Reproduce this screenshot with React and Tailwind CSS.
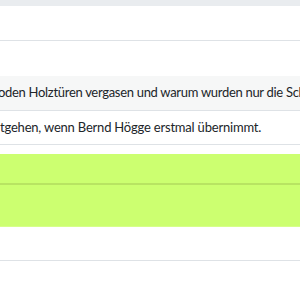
export default function App() {
  const font = { fontFamily: 'Lato, "Noto Sans", sans-serif' };
  return (
    <div className="w-[300px] h-[300px] overflow-hidden bg-white text-[#212529]" style={font}>
      <div className="h-[6px] bg-[#e9ecef]" />
      <div className="h-[35px] border-b border-[#dee2e6]" />
      <div className="h-[35px]" />
      <div className="h-[35px] bg-[#f6f7f7] border-b border-[#dee2e6] flex items-center overflow-hidden">
        <span className="whitespace-nowrap text-[13px] tracking-[-0.3px] ml-[-2px]">oden Holztüren vergasen und warum wurden nur die Schuhe</span>
      </div>
      <div className="h-[34px] border-b border-[#dee2e6] flex items-center overflow-hidden">
        <span className="whitespace-nowrap text-[13px] tracking-[-0.2px]">tgehen, wenn Bernd Högge erstmal übernimmt.</span>
      </div>
      <div className="h-[9px]" />
      <div className="h-[29px] bg-[#ccff70]" />
      <div className="h-[2px] bg-[#b8e462]" />
      <div className="h-[41px] bg-[#ccff70]" />
      <div className="h-[1px] bg-[#d6ff8a]" />
      <div className="h-[34px] border-b border-[#dee2e6]" />
    </div>
  );
}
